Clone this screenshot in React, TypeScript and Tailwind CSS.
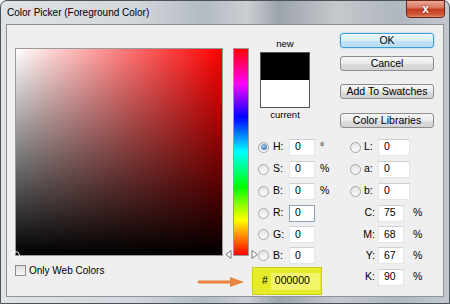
import React from "react";

const font = { fontFamily: '"Liberation Sans", Arial, sans-serif' };

function Radio({ checked = false }: { checked?: boolean }) {
  return (
    <div className="w-[11px] h-[11px] rounded-full border border-[#a3a8ad] bg-[linear-gradient(to_bottom,#e2e4e6,#fbfbfb)] flex items-center justify-center shrink-0">
      {checked && (
        <div className="w-[6px] h-[6px] rounded-full bg-[radial-gradient(circle_at_40%_35%,#9fd0f5,#1f5f9e)]" />
      )}
    </div>
  );
}

function Field({ value, w = 26, focus = false }: { value: string; w?: number; focus?: boolean }) {
  return (
    <div
      className={`h-[17px] bg-white border ${focus ? "border-[#8da2b8]" : "border-[#e3e5ea] border-t-[#cdd0d6]"} flex items-center pl-[5px] text-[10.5px] text-black shrink-0`}
      style={{ width: w }}
    >
      {value}
    </div>
  );
}

function Btn({ label, def = false }: { label: string; def?: boolean }) {
  return (
    <div
      className={`h-[15px] w-[94px] rounded-[3px] border ${def ? "border-[#3c9bd8] shadow-[0_0_2px_#7fcaf0] bg-[linear-gradient(to_bottom,#f2f9fd,#d8eefa_50%,#c4e4f6_51%,#b7dcf2)]" : "border-[#8c8c8c] bg-[linear-gradient(to_bottom,#f6f6f6,#ebebeb_50%,#dddddd_51%,#d2d2d2)]"} flex items-center justify-center text-[10.5px] text-black`}
    >
      {label}
    </div>
  );
}

function LeftRow({ label, value, unit, checked, focus }: { label: string; value: string; unit?: string; checked?: boolean; focus?: boolean }) {
  return (
    <div className="w-[92px] flex items-center">
      <Radio checked={checked} />
      <span className="ml-[4px] w-[16px] text-[10.5px]">{label}</span>
      <Field value={value} focus={focus} />
      {unit && <span className="ml-[5px] text-[10.5px]">{unit}</span>}
    </div>
  );
}

function LabRow({ label, value }: { label: string; value: string }) {
  return (
    <div className="flex items-center">
      <Radio />
      <span className="ml-[3px] w-[14px] text-[10.5px]">{label}</span>
      <Field value={value} w={32} />
    </div>
  );
}

function CmykRow({ label, value }: { label: string; value: string }) {
  return (
    <div className="flex items-center">
      <span className="w-[28px] pr-[3px] text-right text-[10.5px]">{label}</span>
      <Field value={value} w={26} />
      <span className="ml-[9px] text-[10.5px]">%</span>
    </div>
  );
}

export default function App() {
  return (
    <div className="w-[450px] h-[304px] overflow-hidden bg-[#f0f0f0] text-black" style={font}>
      <div className="relative w-full h-full rounded-t-[7px] border border-[#4a535b] bg-[linear-gradient(to_right,#dfe3e6_0%,#d2d7db_30%,#b4bbc1_45%,#c9ced2_55%,#9ca3a9_62%,#c4c9cd_75%,#b0b7bd_88%,#c2c8cd_100%)] flex flex-col">
        {/* title bar */}
        <div className="h-[23px] flex items-center pl-[6px] text-[10px] text-black shrink-0">
          Color Picker (Foreground Color)
        </div>
        <div className="absolute right-[4px] top-[-1px] w-[39px] h-[18px] rounded-b-[4px] border border-[#6b2318] bg-[linear-gradient(to_bottom,#e9a996,#d8735b_45%,#c2391f_50%,#cf5a3b_85%,#e08a6a)] flex items-center justify-center text-white text-[12px] font-bold [text-shadow:0_0_2px_#5a1005]">
          x
        </div>

        {/* content */}
        <div className="mx-[5px] mb-[6px] flex-1 bg-[#efefef] border border-[#8a939b] flex pl-[8px] pt-[23px]">
          {/* left: field */}
          <div className="w-[208px] flex flex-col shrink-0">
            <div className="relative w-[208px] h-[208px] border border-[#9a9a9a] bg-[linear-gradient(to_right,#ffffff,#ff0000)]">
              <div className="absolute inset-0 bg-[linear-gradient(to_top,#000000,rgba(0,0,0,0))]" />
              <div className="absolute left-[-5px] bottom-[-5px] w-[9px] h-[9px] rounded-full border border-white" />
            </div>
            <div className="mt-[7px] flex items-center">
              <div className="w-[11px] h-[11px] border border-[#8f8f8f] bg-[linear-gradient(to_bottom,#dcdcdc,#f7f7f7)]" />
              <span className="ml-[3px] text-[10px]">Only Web Colors</span>
            </div>
          </div>

          {/* hue slider */}
          <div className="relative ml-[10px] w-[16px] h-[208px] border border-[#9a9a9a] bg-[linear-gradient(to_bottom,#ff0000,#ff00ff_17%,#0000ff_33%,#00ffff_50%,#00ff00_67%,#ffff00_83%,#ff0000)] shrink-0">
            <svg className="absolute left-[-9px] bottom-[-4px]" width="7" height="9" viewBox="0 0 7 9">
              <path d="M6 0.5 L0.8 4.5 L6 8.5 Z" fill="#fff" stroke="#777" strokeWidth="1" />
            </svg>
            <svg className="absolute right-[-10px] bottom-[-4px]" width="7" height="9" viewBox="0 0 7 9">
              <path d="M1 0.5 L6.2 4.5 L1 8.5 Z" fill="#fff" stroke="#777" strokeWidth="1" />
            </svg>
          </div>

          {/* right */}
          <div className="ml-[9px] flex flex-col w-[185px] -mt-[23px]">
            <div className="flex">
              <div className="w-[82px] flex flex-col items-start pl-[2px] pt-[13px]">
                <div className="w-[50px] text-center text-[9.5px] leading-[12px]">new</div>
                <div className="mt-[2px] w-[50px] h-[56px] border border-[#555] flex flex-col">
                  <div className="flex-1 bg-black" />
                  <div className="flex-1 bg-white" />
                </div>
                <div className="w-[50px] text-center text-[9.5px] leading-[12px] mt-[1px]">current</div>
              </div>
              <div className="flex flex-col pt-[8px]">
                <Btn label="OK" def />
                <div className="mt-[8px]"><Btn label="Cancel" /></div>
                <div className="mt-[13px]"><Btn label="Add To Swatches" /></div>
                <div className="mt-[14px]"><Btn label="Color Libraries" /></div>
              </div>
            </div>

            <div className="mt-[8px] flex flex-col">
              <div className="h-[22px] flex items-center">
                <LeftRow label="H:" value="0" unit="°" checked />
                <LabRow label="L:" value="0" />
              </div>
              <div className="h-[22px] flex items-center">
                <LeftRow label="S:" value="0" unit="%" />
                <LabRow label="a:" value="0" />
              </div>
              <div className="h-[22px] flex items-center">
                <LeftRow label="B:" value="0" unit="%" />
                <LabRow label="b:" value="0" />
              </div>
              <div className="h-[22px] flex items-center">
                <LeftRow label="R:" value="0" focus />
                <CmykRow label="C:" value="75" />
              </div>
              <div className="h-[21px] flex items-center">
                <LeftRow label="G:" value="0" />
                <CmykRow label="M:" value="68" />
              </div>
              <div className="h-[21px] flex items-center">
                <LeftRow label="B:" value="0" />
                <CmykRow label="Y:" value="67" />
              </div>
              <div className="flex items-start">
                <div className="w-[92px]">
                  <div className="-ml-[6px] mt-[1px] w-[70px] h-[28px] bg-[#e6ec2a] border border-[#c9cf1e] flex items-center pl-[9px]">
                    <span className="text-[10.5px]">#</span>
                    <div className="ml-[3px] w-[49px] h-[17px] bg-[#f4f66a] flex items-center pl-[4px] text-[10.5px]">000000</div>
                  </div>
                </div>
                <div className="h-[22px] flex items-center">
                  <CmykRow label="K:" value="90" />
                </div>
              </div>
            </div>
          </div>
        </div>

        {/* annotation arrow */}
        <svg className="absolute left-[196px] top-[275px]" width="50" height="12" viewBox="0 0 50 12">
          <path d="M2 6 L36 6" stroke="#e8843c" strokeWidth="3" strokeLinecap="round" />
          <path d="M33 1 L47 6 L33 11 Z" fill="#e8843c" />
        </svg>
      </div>
    </div>
  );
}
